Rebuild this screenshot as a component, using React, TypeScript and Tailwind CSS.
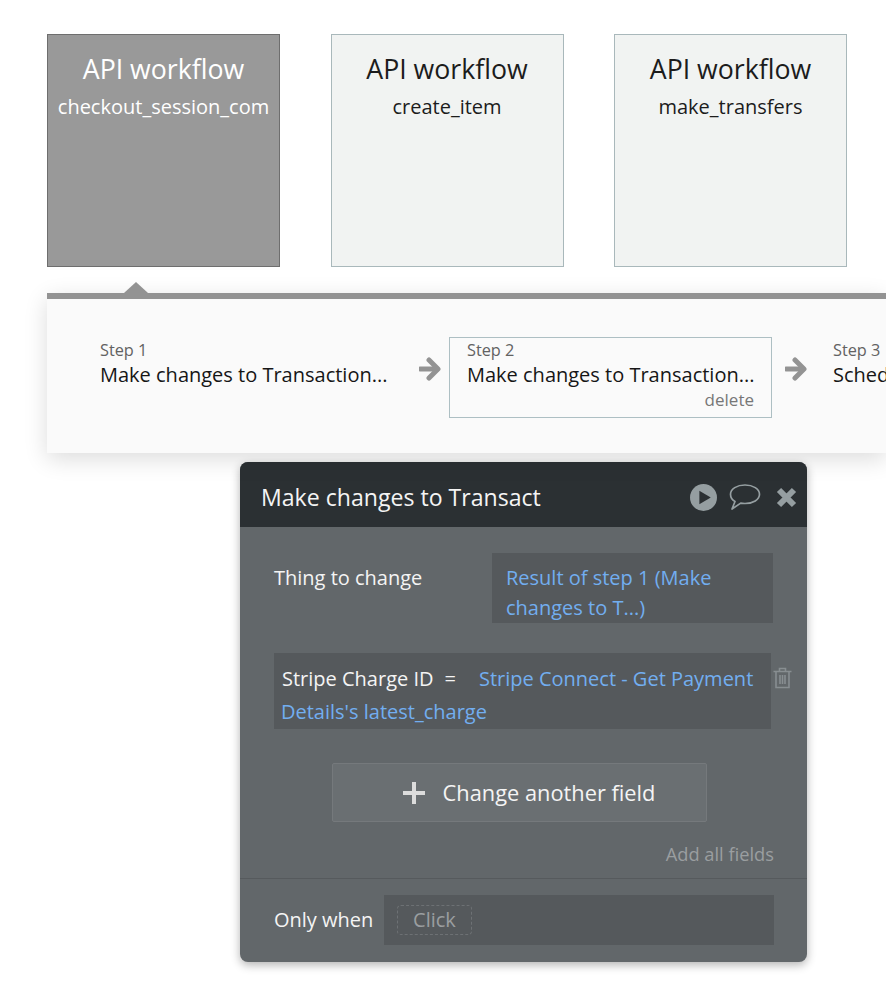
import React from 'react';

const WorkflowCard = ({ name, selected }: { name: string; selected?: boolean }) => (
  <div
    className={`w-[233px] h-[233px] border overflow-hidden pt-[14px] text-center ${
      selected ? 'bg-[#999999] border-[#6e6e6e] text-white' : 'bg-[#f1f3f2] border-[#a9b8bb] text-[#1c1c1c]'
    }`}
  >
    <div className="text-[26.7px] leading-[40px]">API workflow</div>
    <div className="text-[20px] leading-[30px] mt-[3px] whitespace-nowrap">{name}</div>
  </div>
);

const StepArrow = () => (
  <svg className="w-[22px] h-[24px] shrink-0" viewBox="0 0 22 24" fill="none" stroke="#939393" strokeWidth="5">
    <path d="M1 12h17" strokeLinecap="round" />
    <path d="M10 3 19 12l-9 9" strokeLinejoin="round" strokeLinecap="round" />
  </svg>
);

const App: React.FC = () => {
  return (
    <div className="w-[886px] h-[1000px] overflow-hidden bg-white pt-[34px] pl-[47px] font-['Open_Sans',sans-serif]">
      {/* Workflow cards */}
      <div className="flex gap-[50.5px]">
        <WorkflowCard name="checkout_session_com" selected />
        <WorkflowCard name="create_item" />
        <WorkflowCard name="make_transfers" />
      </div>

      {/* Steps panel */}
      <div className="relative mt-[26px] h-[160px] w-[839px] bg-[#fafafa] border-t-[6px] border-[#939393] shadow-[0_6px_22px_rgba(0,0,0,0.14)]">
        <div className="absolute left-[77px] top-[-17px] w-0 h-0 border-x-[12px] border-x-transparent border-b-[11px] border-b-[#939393]" />
        <div className="flex items-start pt-[38px] pl-[53px] whitespace-nowrap">
          <div className="w-[288px] shrink-0 pt-[2px]">
            <div className="text-[16.3px] leading-[22px] text-[#626262]">Step 1</div>
            <div className="text-[20px] leading-[28px] text-[#161616]">Make changes to Transaction...</div>
          </div>
          <div className="ml-[31px] mr-[8px] mt-[20px]">
            <StepArrow />
          </div>
          <div className="w-[323px] h-[81px] shrink-0 border-[1.5px] border-[#adbfc3] pl-[17px] pr-[17px] pt-[1px]">
            <div className="text-[16.3px] leading-[22px] text-[#626262]">Step 2</div>
            <div className="text-[20px] leading-[28px] text-[#161616]">Make changes to Transaction...</div>
            <div className="text-right text-[17px] leading-[22px] text-[#777777]">delete</div>
          </div>
          <div className="ml-[13px] mr-[26px] mt-[20px]">
            <StepArrow />
          </div>
          <div className="shrink-0 pt-[2px]">
            <div className="text-[16.3px] leading-[22px] text-[#626262]">Step 3</div>
            <div className="text-[20px] leading-[28px] text-[#161616]">Sched</div>
          </div>
        </div>
      </div>

      {/* Action editor */}
      <div className="ml-[193px] mt-[9px] w-[567px] h-[500px] rounded-[8px] overflow-hidden bg-[#62676a] shadow-[0_3px_10px_rgba(0,0,0,0.3)]">
        <div className="h-[65px] bg-[#2b3033] flex items-center pl-[21px] pr-[10px] pt-[5px]">
          <div className="whitespace-nowrap text-[23.1px] text-[#f4f4f4]">Make changes to Transact</div>
          <div className="ml-auto flex items-center">
            <svg className="w-[27px] h-[27px]" viewBox="0 0 26 26">
              <circle cx="13" cy="13" r="13" fill="#959ea1" />
              <path d="M9 6.500 20 13 9 19.500z" fill="#2b3033" />
            </svg>
            <svg className="ml-[12px] w-[32px] h-[28px]" viewBox="0 0 32 28" fill="none" stroke="#959ea1" strokeWidth="1.700">
              <path d="M16 2c8 0 14.500 3.900 14.500 9.300S24 20.500 16 20.500c-1.500 0-3-.1-4.300-.4L3 26l3-7.500C3 16.800 1.500 14.200 1.500 11.300 1.500 5.900 8 2 16 2z" strokeLinejoin="round" />
            </svg>
            <svg className="ml-[15px] w-[21px] h-[21px]" viewBox="0 0 21 21" stroke="#959ea1" strokeWidth="6">
              <path d="M3 3l15 15M18 3 3 18" />
            </svg>
          </div>
        </div>

        <div className="pl-[34px] pt-[26px] relative">
          <div className="flex">
            <div className="w-[218px] pt-[10px] text-[20px] leading-[30px] text-[#f4f4f4]">Thing to change</div>
            <div className="w-[281px] h-[70px] bg-[#55595c] pl-[14px] pt-[10px] text-[20px] leading-[30px] text-[#72aef0]">
              Result of step 1 (Make
              <br />
              changes to T...)
            </div>
          </div>

          <div className="flex mt-[30px]">
            <div className="w-[497px] h-[76px] bg-[#55595c] pl-[7px] pt-[9px] text-[20px] leading-[33px] whitespace-nowrap">
              <span className="text-[#f4f4f4] pl-[1px]">Stripe Charge ID</span>
              <span className="text-[#f4f4f4] ml-[11px]">=</span>
              <span className="text-[#72aef0] ml-[23px]">Stripe Connect - Get Payment</span>
              <br />
              <span className="text-[#72aef0]">Details's latest_charge</span>
            </div>
            <svg className="ml-[1px] mt-[14px] w-[21px] h-[22px]" viewBox="0 0 20 22" fill="none" stroke="#888e91" strokeWidth="1.600">
              <path d="M1 4.500h18M7 4.500V1.500h6v3M3.500 4.500v16h13v-16M7.500 8v9M10 8v9M12.500 8v9" />
            </svg>
          </div>

          <div className="mt-[34px] ml-[58px] w-[375px] h-[59px] rounded-[2px] border border-[#75797c] bg-[#6a6f72] flex items-center justify-center pl-[18px] pt-[1px] text-[#f4f4f4] text-[21.8px]">
            <svg className="w-[24px] h-[24px] mr-[17px]" viewBox="0 0 24 24" stroke="#dcdcdc" strokeWidth="4">
              <path d="M12 1v22M1 12h22" />
            </svg>
            Change another field
          </div>

          <div className="mt-[19px] w-[500px] text-right text-[18.3px] leading-[26px] text-[#9a9ea0]">Add all fields</div>
        </div>

        <div className="mt-[11px] border-t border-[#565a5d] h-[83px] pl-[34px] pt-[16px] flex">
          <div className="w-[110px] pt-[10px] text-[20px] leading-[30px] text-[#f4f4f4]">Only when</div>
          <div className="w-[390px] h-[50px] bg-[#55595c] pl-[13px] flex items-center">
            <div className="w-[75px] h-[30px] rounded-[4px] border border-dashed border-[#6d7174] text-center text-[20px] leading-[28px] text-[#9a9ea0]">
              Click
            </div>
          </div>
        </div>
      </div>
    </div>
  );
};

export default App;
